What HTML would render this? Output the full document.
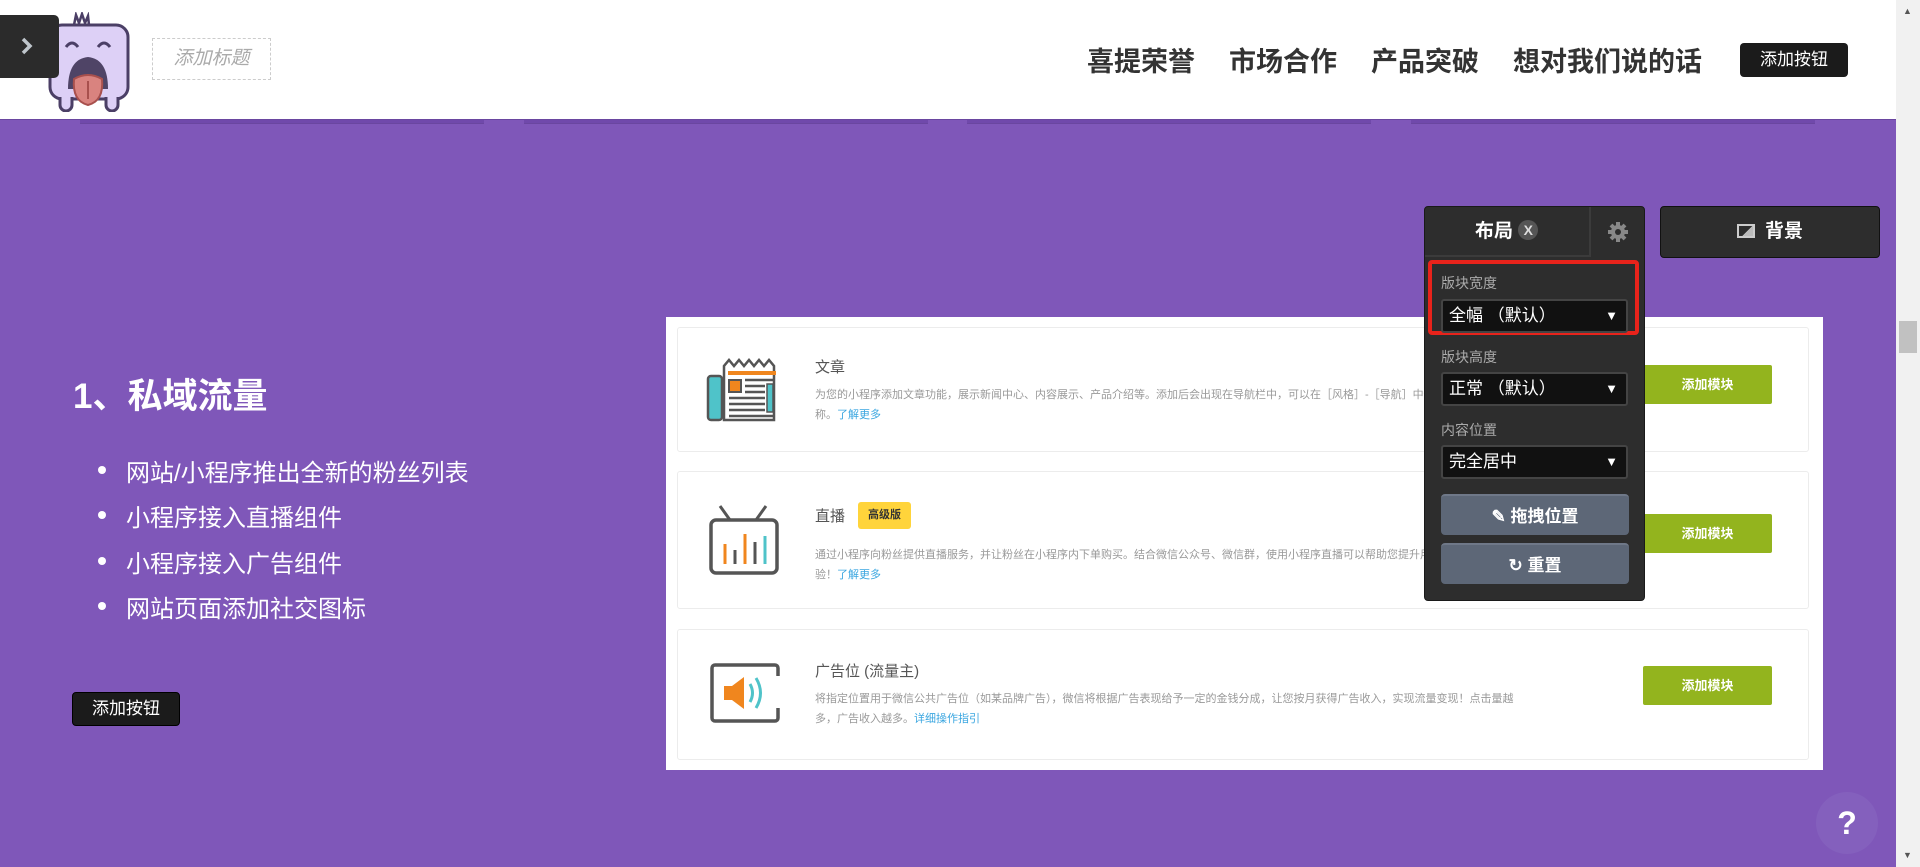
<!DOCTYPE html>
<html><head><meta charset="utf-8">
<style>
*{box-sizing:border-box;margin:0;padding:0}
body{width:1920px;height:867px;overflow:hidden;position:relative;background:#7f57b9;font-family:"Liberation Sans","Noto Sans CJK SC",sans-serif}
.abs{position:absolute}
#hdr{left:0;top:0;width:1896px;height:120px;background:#fff;border-bottom:1px solid #6a46a0}
.nav{top:40px;font-size:27px;font-weight:bold;color:#333;white-space:nowrap}
.btn-dark{background:#1b1b1b;color:#fff;border-radius:4px;font-size:18px;text-align:center}
.tabline{top:120px;height:4px;background:#7049ab;border-bottom:1px solid #6a46a0}
.bul{left:98px;font-size:24px;color:#fff;white-space:nowrap}
.bul::before{content:"";position:absolute;left:0;top:13px;width:8px;height:8px;border-radius:50%;background:#fff}
.bul span{margin-left:28px}
.card{left:677px;width:1132px;background:#fff;border:1px solid #ececec;border-radius:3px}
.ct{left:137px;font-size:15px;color:#555}
.cd{left:137px;font-size:11px;color:#999;line-height:20px;width:820px}
.cd a{color:#3aa6e0;text-decoration:none}
.gbtn{left:965px;width:129px;height:39px;background:#93b41e;color:#fff;font-size:13px;font-weight:bold;text-align:center;line-height:39px;border-radius:2px}
.lbl{left:16px;font-size:14px;color:#aaa}
.sel{left:16px;width:187px;height:34px;background:#111;border:2px solid #444;border-radius:3px;color:#fff;font-size:17px;line-height:30px;padding-left:6px}
.sel::after{content:"▼";position:absolute;right:8px;top:0;font-size:13px}
.pbtn{left:16px;width:188px;height:41px;background:#5d6777;border-radius:4px;color:#fff;font-size:17px;font-weight:bold;text-align:center;line-height:41px;border-top:2px solid #6f7888}
</style></head><body>
<div id="hdr" class="abs"></div>
<div class="abs tabline" style="left:80px;width:404px"></div>
<div class="abs tabline" style="left:524px;width:404px"></div>
<div class="abs tabline" style="left:967px;width:404px"></div>
<div class="abs tabline" style="left:1411px;width:404px"></div>

<svg class="abs" style="left:46px;top:12px" width="86" height="100" viewBox="0 0 86 98">
<path d="M28 12 l2-10 l3 8 l3-9 l3 9 l3-7 l1 9" fill="none" stroke="#4b3f66" stroke-width="2.5"/>
<rect x="4" y="12" width="78" height="74" rx="12" fill="#ddd0f6" stroke="#4b3f66" stroke-width="3"/>
<path d="M14 84 v8 a6 6 0 0 0 12 0 v-8 M60 84 v8 a6 6 0 0 0 12 0 v-8" fill="#ddd0f6" stroke="#4b3f66" stroke-width="3"/>
<path d="M20 34 q6-8 12 0 M52 34 q6-8 12 0" fill="none" stroke="#4b3f66" stroke-width="3"/>
<path d="M22 76 q0-30 20-32 q20 2 20 32 z" fill="#4f4466"/>
<path d="M28 66 q14-8 28 0 q2 22-14 26 q-16-4-14-26z" fill="#d9837f" stroke="#a8504d" stroke-width="2"/>
<path d="M42 68 v18" stroke="#a8504d" stroke-width="2"/>
</svg>
<div class="abs" style="left:0;top:15px;width:59px;height:63px;background:#2b2b2b;border-radius:0 5px 5px 0"></div>
<svg class="abs" style="left:20px;top:36px" width="14" height="20" viewBox="0 0 14 20"><path d="M3 3 l7 7 l-7 7" fill="none" stroke="#bfc6cc" stroke-width="3.5"/></svg>
<div class="abs" style="left:152px;top:38px;width:119px;height:42px;border:1px dashed #ccc;color:#aaa;font-size:19px;font-style:italic;line-height:40px;text-align:center">添加标题</div>

<div class="abs nav" style="left:1087px">喜提荣誉</div>
<div class="abs nav" style="left:1229px">市场合作</div>
<div class="abs nav" style="left:1371px">产品突破</div>
<div class="abs nav" style="left:1513px">想对我们说的话</div>
<div class="abs btn-dark" style="left:1740px;top:43px;width:108px;height:34px;line-height:34px;font-size:17px">添加按钮</div>

<div class="abs" style="left:1896px;top:0;width:24px;height:867px;background:#f1f1f1"></div>
<div class="abs" style="left:1899px;top:321px;width:18px;height:32px;background:#c1c1c1"></div>
<div class="abs" style="left:1903px;top:6px;font-size:9px;color:#555">▲</div>
<div class="abs" style="left:1903px;top:850px;font-size:9px;color:#555">▼</div>

<div class="abs" style="left:73px;top:368px;font-size:35px;font-weight:bold;color:#fff">1、私域流量</div>
<div class="abs bul" style="top:453px"><span>网站/小程序推出全新的粉丝列表</span></div>
<div class="abs bul" style="top:498px"><span>小程序接入直播组件</span></div>
<div class="abs bul" style="top:544px"><span>小程序接入广告组件</span></div>
<div class="abs bul" style="top:589px"><span>网站页面添加社交图标</span></div>
<div class="abs btn-dark" style="left:72px;top:692px;width:108px;height:34px;line-height:32px;border:1px solid #000;font-size:17px">添加按钮</div>

<div class="abs" style="left:666px;top:317px;width:1157px;height:453px;background:#fff"></div>

<div class="abs card" style="top:327px;height:125px">
  <svg class="abs" style="left:28px;top:30px" width="80" height="66" viewBox="0 0 80 66">
   <path d="M18 62 V8 l5-6 l5 6 l5-6 l5 6 l5-6 l5 6 l5-6 l5 6 l5-6 l5 6 V62 Z" fill="#fff" stroke="#555" stroke-width="2.5"/>
   <rect x="2" y="18" width="14" height="44" rx="3" fill="#4fc3c9" stroke="#555" stroke-width="2.5"/>
   <rect x="22" y="13" width="48" height="4" fill="#f0861e"/>
   <rect x="23" y="22" width="12" height="12" fill="#f0861e" stroke="#555" stroke-width="2"/>
   <path d="M39 22h28M39 28h20M39 34h20M23 40h36M23 46h36M23 52h36M23 58h44" stroke="#555" stroke-width="2.5"/>
   <rect x="61" y="26" width="6" height="28" fill="#4fc3c9" stroke="#555" stroke-width="1.5"/>
  </svg>
  <div class="abs ct" style="top:28px">文章</div>
  <div class="abs cd" style="top:57px">为您的小程序添加文章功能，展示新闻中心、内容展示、产品介绍等。添加后会出现在导航栏中，可以在［风格］-［导航］中修改名<br>称。<a>了解更多</a></div>
  <div class="abs gbtn" style="top:37px">添加模块</div>
</div>

<div class="abs card" style="top:471px;height:138px">
  <svg class="abs" style="left:30px;top:32px" width="74" height="72" viewBox="0 0 74 72">
   <path d="M12 2 l10 14 M58 2 l-10 14" stroke="#555" stroke-width="3"/>
   <rect x="3" y="16" width="66" height="53" rx="5" fill="none" stroke="#555" stroke-width="3.5"/>
   <path d="M17 60v-20" stroke="#f0861e" stroke-width="3"/><path d="M27 60v-14" stroke="#555" stroke-width="3"/>
   <path d="M37 60v-30" stroke="#f0861e" stroke-width="3"/><path d="M47 60v-22" stroke="#555" stroke-width="3"/>
   <path d="M57 60v-28" stroke="#4fc3c9" stroke-width="3"/>
  </svg>
  <div class="abs ct" style="top:33px">直播</div>
  <div class="abs" style="left:180px;top:30px;width:53px;height:27px;background:#ffd43b;border-radius:3px;font-size:11px;font-weight:bold;color:#333;text-align:center;line-height:27px">高级版</div>
  <div class="abs cd" style="top:73px">通过小程序向粉丝提供直播服务，并让粉丝在小程序内下单购买。结合微信公众号、微信群，使用小程序直播可以帮助您提升用户体<br>验！<a>了解更多</a></div>
  <div class="abs gbtn" style="top:42px">添加模块</div>
</div>

<div class="abs card" style="top:629px;height:131px">
  <svg class="abs" style="left:30px;top:32px" width="74" height="62" viewBox="0 0 74 62">
   <path d="M70 14 V6 a3 3 0 0 0-3-3 H7 a3 3 0 0 0-3 3 V56 a3 3 0 0 0 3 3 H67 a3 3 0 0 0 3-3 V46" fill="none" stroke="#555" stroke-width="3.5"/>
   <path d="M16 24 h8 l12-9 v32 l-12-9 h-8z" fill="#f0861e"/>
   <path d="M42 22 q5 9 0 18 M48 16 q9 15 0 30" fill="none" stroke="#4fc3c9" stroke-width="3"/>
  </svg>
  <div class="abs ct" style="top:30px">广告位 (流量主)</div>
  <div class="abs cd" style="top:59px">将指定位置用于微信公共广告位（如某品牌广告），微信将根据广告表现给予一定的金钱分成，让您按月获得广告收入，实现流量变现！点击量越<br>多，广告收入越多。<a>详细操作指引</a></div>
  <div class="abs gbtn" style="top:36px">添加模块</div>
</div>

<div class="abs" style="left:1424px;top:206px;width:221px;height:395px;background:#2d2d2d;border:1px solid #1a1a1a;border-radius:4px">
  <div class="abs" style="left:0;top:0;width:166px;height:50px;border-right:2px solid #3b3b3b;border-bottom:2px solid #3b3b3b;color:#fff;font-size:19px;font-weight:bold;line-height:50px;padding-left:50px">布局 <span style="display:inline-block;width:20px;height:20px;border-radius:50%;background:#555;color:#ddd;font-size:14px;line-height:20px;text-align:center;vertical-align:2px">X</span></div>
  <svg class="abs" style="left:182px;top:14px" width="22" height="22" viewBox="0 0 22 22"><g fill="#888"><circle cx="11" cy="11" r="7"/><g stroke="#888" stroke-width="4"><path d="M11 1v20M1 11h20M4 4l14 14M18 4L4 18"/></g></g><circle cx="11" cy="11" r="3" fill="#2d2d2d"/></svg>
  <div class="abs" style="left:3px;top:53px;width:211px;height:75px;border:4px solid #e8231b;border-radius:4px"></div>
  <div class="abs lbl" style="top:66px">版块宽度</div>
  <div class="abs sel" style="top:92px">全幅 （默认）</div>
  <div class="abs lbl" style="top:140px">版块高度</div>
  <div class="abs sel" style="top:165px">正常 （默认）</div>
  <div class="abs lbl" style="top:213px">内容位置</div>
  <div class="abs sel" style="top:238px">完全居中</div>
  <div class="abs pbtn" style="top:287px">✎ 拖拽位置</div>
  <div class="abs pbtn" style="top:336px">↻ 重置</div>
</div>
<div class="abs" style="left:1660px;top:206px;width:220px;height:52px;background:#2d2d2d;border:1px solid #111;border-radius:4px;color:#fff;font-size:19px;font-weight:bold;text-align:center;line-height:50px"><span style="display:inline-block;width:18px;height:14px;border:2px solid #ccc;vertical-align:-1px;margin-right:10px;background:linear-gradient(135deg,transparent 55%,#bbb 55%)"></span>背景</div>

<div class="abs" style="left:1816px;top:792px;width:62px;height:62px;border-radius:50%;background:#8460bd;color:#fff;font-size:32px;font-weight:bold;text-align:center;line-height:62px">?</div>
</body></html>
